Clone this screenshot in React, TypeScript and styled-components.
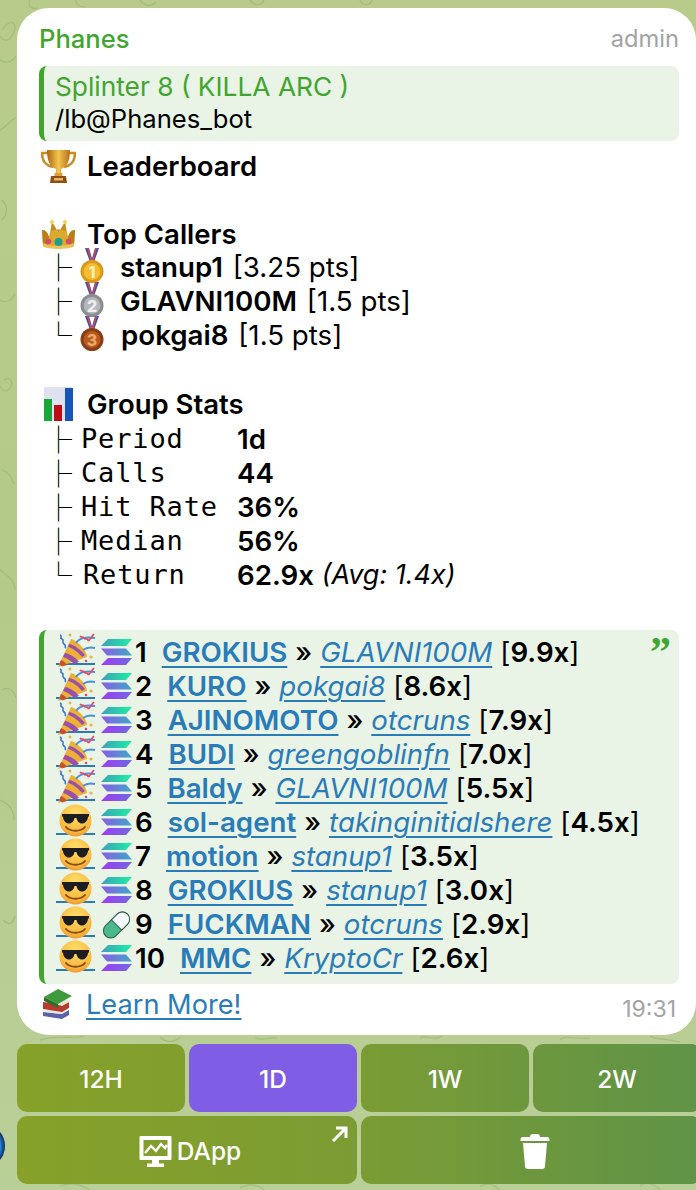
import React from "react";
import styled, { createGlobalStyle, css } from "styled-components";

const Global = createGlobalStyle`
  html, body { margin: 0; padding: 0; width: 696px; height: 1190px; overflow: hidden; background: #b7cc90; }
  * { box-sizing: border-box; }
`;

const Shell = styled.div`
  position: relative;
  width: 696px;
  height: 1190px;
  overflow: hidden;
  padding: 8px 0 0 17px;
  background: linear-gradient(180deg, #b8cb8a 0%, #b4ca8a 50%, #b9cf98 100%);
  font-family: Inter, "Noto Sans", sans-serif;
  color: #000;
`;
const Doodles = styled.svg`
  position: absolute;
  inset: 0;
  width: 696px;
  height: 1190px;
  pointer-events: none;
`;
const Bubble = styled.div`
  position: relative;
  width: 679px;
  height: 1027px;
  background: #fff;
  border-radius: 32px;
  padding: 11px 17px 0 22px;
`;
const Header = styled.div`
  display: flex;
  justify-content: space-between;
  align-items: center;
  height: 38px;
  margin-bottom: 9px;
`;
const Sender = styled.span`
  color: #42a52f;
  font-size: 25.6px;
  font-weight: 500;
`;
const Role = styled.span`
  color: #a3a3a3;
  font-size: 23.7px;
`;
const Reply = styled.div`
  height: 75px;
  border-radius: 8px;
  background: #e9f3e6;
  border-left: 5px solid #42a52f;
  padding: 5px 0 0 12px;
  margin-bottom: 8px;
`;
const ReplyTitle = styled.div`
  color: #42a52f;
  font-size: 26.3px;
  line-height: 32px;
  margin-left: -1px;
`;
const ReplyText = styled.div`
  font-size: 25.6px;
  line-height: 32px;
  margin-left: -1px;
`;
const Line = styled.div`
  height: 34px;
  line-height: 34px;
  font-size: 27.7px;
  white-space: pre;
  position: relative;
`;
const Heading = styled(Line)`
  display: flex;
  align-items: center;
  font-weight: 600;
  font-size: 27.5px;
  padding-left: 2px;
  gap: 11px;
`;
const Tree = styled.span`
  font-family: "Noto Sans CJK JP", sans-serif;
  font-size: 27px;
  font-weight: 300;
  display: inline-block;
  width: 27px;
  line-height: 34px;
  vertical-align: top;
`;
const TreeRow = styled(Line)<{ $down?: number; $up?: number }>`
  display: flex;
  align-items: center;
  padding-left: 6px;
  padding-top: ${(p) => p.$down ?? 0}px;
  padding-bottom: ${(p) => p.$up ?? 0}px;
`;
const MedalSlot = styled.span`
  display: inline-flex;
  margin-left: 7px;
`;
const Caller = styled.b<{ $shift: number }>`
  font-weight: 600;
  margin-left: ${(p) => p.$shift}px;
`;
const Plain = styled.span`
  font-weight: 400;
  margin-left: 2px;
`;
const Mono = styled.span<{ $nudge?: number }>`
  font-family: "DejaVu Sans Mono", monospace;
  font-size: 27px;
  letter-spacing: 0.85px;
  margin-left: ${(p) => 9 + (p.$nudge ?? 0)}px;
  width: ${(p) => 156 - (p.$nudge ?? 0)}px;
`;
const Value = styled.b`
  font-weight: 600;
`;
const Note = styled.i`
  font-weight: 400;
  font-size: 27px;
`;
const Quote = styled.div`
  position: relative;
  height: 354px;
  margin-top: 5px;
  border-radius: 8px;
  background: #e9f3e6;
  border-left: 5px solid #42a52f;
  padding: 5px 0 0 12px;
`;
const QuoteMark = styled.span`
  position: absolute;
  top: 1px;
  right: 8px;
  color: #42a52f;
  font-family: "Liberation Serif", serif;
  font-weight: 700;
  font-size: 42px;
  line-height: 42px;
`;
const EmojiLink = styled.a`
  display: inline-block;
  width: 39px;
  height: 30px;
  border-bottom: 2px solid #2a7cb8;
  vertical-align: top;
  position: relative;
`;
const linkStyle = css`
  color: #2a7cb8;
  text-decoration: underline;
  text-decoration-thickness: 2px;
  text-underline-offset: 4px;
`;
const Name = styled.a`
  ${linkStyle}
  font-weight: 600;
  margin-left: 15px;
`;
const Sep = styled.span`
  font-weight: 500;
  margin: 0 8px;
`;
const Who = styled.a`
  ${linkStyle}
  font-style: italic;
  font-weight: 400;
`;
const Multi = styled.span`
  margin-left: 8px;
  b { font-weight: 600; }
`;
const Num = styled.b`
  font-weight: 600;
  margin-left: 3px;
`;
const Footer = styled.div`
  display: flex;
  align-items: center;
  height: 38px;
  margin-top: 1px;
  padding-left: 3px;
  position: relative;
`;
const Learn = styled.a`
  ${linkStyle}
  font-size: 27.2px;
  margin-left: 12px;
`;
const Time = styled.span`
  position: absolute;
  right: 3px;
  top: 10px;
  font-size: 23px;
  color: #a3a3a3;
`;
const Keys = styled.div`
  display: grid;
  grid-template-columns: repeat(4, 168px);
  grid-auto-rows: 68px;
  gap: 4px;
  margin-top: 9px;
`;
const Key = styled.button<{ $active?: boolean; $span?: number; $pad?: number }>`
  position: relative;
  grid-column: span ${(p) => p.$span ?? 1};
  border: 0;
  padding: 2px 0 0 ${(p) => p.$pad ?? 0}px;
  border-radius: 10px;
  display: flex;
  align-items: center;
  justify-content: center;
  gap: 5px;
  color: #fff;
  font-family: Inter, sans-serif;
  font-size: 24.5px;
  font-weight: 500;
  background: ${(p) =>
    p.$active
      ? "#7f5de4"
      : "linear-gradient(90deg, #87a128 0%, #7c9c33 50%, #5f9347 100%) fixed"};
`;
const Corner = styled.svg`
  position: absolute;
  top: 9px;
  right: 8px;
`;
const Avatar = styled.div`
  position: absolute;
  left: -39px;
  top: 1124px;
  width: 44px;
  height: 44px;
  border-radius: 50%;
  background: radial-gradient(circle closest-side at 50% 50%, #27b6e8 0 72%, #1b5fb0 86%, #0b2a5a 100%);
`;
const Ic = styled.svg`
  flex: none;
  display: block;
`;
const MedalIc = styled.svg`
  flex: none;
  display: block;
  margin-top: -2px;
`;
const EmojiIc = styled.svg<{ $top: number }>`
  position: absolute;
  left: 0;
  top: ${(p) => p.$top}px;
`;
const Solana = styled.svg`
  display: inline-block;
  vertical-align: top;
  margin: 2px 0 0 6px;
`;

const Trophy = () => (
  <Ic width="35" height="35" viewBox="0 0 35 35">
    <defs>
      <linearGradient id="tg" x1="0" x2="1">
        <stop offset="0" stopColor="#a8650f" />
        <stop offset=".5" stopColor="#f4c54f" />
        <stop offset="1" stopColor="#b5701a" />
      </linearGradient>
    </defs>
    <path d="M7 4H1c0 9 5 13 11 14M28 4h6c0 9-5 13-11 14" fill="none" stroke="#c98d24" strokeWidth="2.4" />
    <path d="M6 1h23c0 11-3 17-9 19v5h-5v-5C9 18 6 12 6 1z" fill="url(#tg)" />
    <rect x="13.500" y="24" width="8" height="3" fill="#d9a138" />
    <path d="M10 27h15l1 7H9z" fill="#8f4f14" />
    <rect x="13" y="29" width="9" height="2.500" fill="#e9b75a" />
  </Ic>
);
const Crown = () => (
  <Ic width="35" height="30" viewBox="0 0 35 30">
    <path d="M1 11c4 0 6 3 7 7l3-15 6 10 1 0 6-10 3 15c1-4 3-7 7-7l-1 16c-6 3-25 3-31 0z" fill="#dca92f" />
    <path d="M1 11c4 0 6 3 7 8l-1 7-5 0zM34 11c-4 0-6 3-7 8l1 7 5 0z" fill="#b97d1c" />
    <path d="M11 3l6 10 1 0 6-10 1 9c-4-2-11-2-15 0z" fill="#c48a22" />
    <path d="M2 24c8 4 23 4 31 0l-.500 4c-8 2.500-22 2.500-30 0z" fill="#eac25a" />
    <circle cx="17.500" cy="23" r="4" fill="#1f9f8a" />
    <circle cx="7.500" cy="22.500" r="2.800" fill="#d84a6a" />
    <circle cx="27.500" cy="22.500" r="2.800" fill="#d84a6a" />
    <circle cx="11" cy="3" r="2" fill="#f0cf6a" />
    <circle cx="24" cy="3" r="2" fill="#f0cf6a" />
  </Ic>
);
const Medal = ({ c, d, t, n }: { c: string; d: string; t: string; n: string }) => (
  <MedalIc width="26" height="36" viewBox="0 0 26 36">
    <path d="M6 0h4l4 14h-3zM20 0h-4l-4 14h3z" fill="#3d4fa8" />
    <path d="M8 0h1.400l3.600 13h-1.400zM18 0h-1.400L13 13h1.400z" fill="#d84a4a" />
    <circle cx="13" cy="23.500" r="11.500" fill={c} />
    <circle cx="13" cy="23.500" r="8.400" fill={d} />
    <text x="13" y="29.500" textAnchor="middle" fontSize="16" fontWeight="800" fontFamily="Inter, sans-serif" fill={t}>
      {n}
    </text>
  </MedalIc>
);
const Chart = () => (
  <Ic width="35" height="36" viewBox="0 0 35 36">
    <rect x="3" y="1" width="28" height="34" fill="#dde2ee" />
    <rect x="3" y="13" width="8" height="22" fill="#17a838" />
    <rect x="13" y="19" width="8" height="16" fill="#c00c14" />
    <rect x="24" y="2" width="8" height="33" fill="#1457b8" />
  </Ic>
);
const Party = () => (
  <EmojiIc $top={-3} width="40" height="36" viewBox="0 0 40 36">
    <path d="M2 35L15 7c6 1 16 12 16 18z" fill="#eeb137" />
    <path d="M9 21c6 1 12 6 14 9l-5 2c-3-3-7-6-11-7zM13 12c6 1 13 7 16 11l-3 2c-3-4-9-9-14-10z" fill="#9a4fa8" />
    <path d="M5 28c3 1 5 3 6 5l-5 1.500c-1-1-2-2-3-2z" fill="#c8502e" />
    <path d="M20 11c4-6 11-6 19-5M27 18c4-3 8-3 12-2" fill="none" stroke="#4c8fd8" strokeWidth="2" />
    <path d="M4 3c3 1-1 3 2 4s-1 3 2 5 0 3 2 4" fill="none" stroke="#3a78d0" strokeWidth="1.600" />
    <path d="M24 4c1 2 3 0 4 2s3 0 4 2 3-3 6-6" fill="none" stroke="#e0486a" strokeWidth="1.700" />
    <circle cx="35" cy="25" r="1.600" fill="#e8b83a" />
    <circle cx="30" cy="29" r="1.300" fill="#e0486a" />
    <circle cx="14" cy="3" r="1.400" fill="#e8b83a" />
  </EmojiIc>
);
const Cool = () => (
  <EmojiIc $top={-1} width="40" height="33" viewBox="0 0 40 33">
    <defs>
      <radialGradient id="sm" cx=".5" cy=".3" r=".8">
        <stop offset="0" stopColor="#ffe06c" />
        <stop offset=".7" stopColor="#f9b73c" />
        <stop offset="1" stopColor="#e8852a" />
      </radialGradient>
    </defs>
    <circle cx="19.500" cy="16.500" r="16" fill="url(#sm)" />
    <path d="M6 10h27v2l-1 1c-.5 4-3 6.500-6 6.500s-5-2.500-5.500-5.500h-2C18 17 16 19.500 13 19.500S7.500 17 7 13l-1-1z" fill="#1d1d1f" />
    <path d="M10 23c4 5 15 5 19 0" fill="none" stroke="#8a4a14" strokeWidth="2" strokeLinecap="round" />
  </EmojiIc>
);
const Sol = () => (
  <Solana width="31" height="30" viewBox="0 0 31 30">
    <defs>
      <linearGradient id="so1" x1="0" x2="1">
        <stop offset="0" stopColor="#3fa0b8" />
        <stop offset="1" stopColor="#1cf0a4" />
      </linearGradient>
      <linearGradient id="so2" x1="0" x2="1">
        <stop offset="0" stopColor="#8a5ce8" />
        <stop offset="1" stopColor="#3fa8c8" />
      </linearGradient>
      <linearGradient id="so3" x1="0" x2="1">
        <stop offset="0" stopColor="#a03cf5" />
        <stop offset="1" stopColor="#7068e0" />
      </linearGradient>
    </defs>
    <path d="M7 2h24l-6 7H0z" fill="url(#so1)" />
    <path d="M0 11.500h25l6 7H6z" fill="url(#so2)" />
    <path d="M7 21h24l-6 7H0z" fill="url(#so3)" />
  </Solana>
);
const Pill = () => (
  <Solana width="31" height="32" viewBox="0 0 32 32">
    <g transform="rotate(-45 16 16)">
      <rect x="0" y="8.500" width="32" height="15" rx="7.500" fill="#4bb78c" stroke="#2a5a48" strokeWidth="1" />
      <path d="M16 8.500h8.500a7.500 7.500 0 010 15H16z" fill="#f6f8f8" stroke="#2a5a48" strokeWidth="1" />
    </g>
  </Solana>
);
const Books = () => (
  <Ic width="32" height="32" viewBox="0 0 32 32">
    <path d="M1 24l19 2 7-4v5l-7 4-19-3z" fill="#5a62a8" />
    <path d="M2 24l17 2 6-3-17-2z" fill="#e9e5da" />
    <path d="M1 14l19 3 7-3v6l-7 4-19-3z" fill="#b93a2c" />
    <path d="M3 13l9-5 17 5-9 5z" fill="#e9e5da" />
    <path d="M2 9l14-8 14 7-14 8z" fill="#3f9a3c" />
    <path d="M2 9l14 7v4L2 13z" fill="#2a6f2c" />
  </Ic>
);
const Monitor = () => (
  <Ic width="33" height="33" viewBox="0 0 33 33">
    <path fillRule="evenodd" d="M1.500 1h30a1 1 0 011 1v22a1 1 0 01-1 1H20v3.500h5V32H8v-3.500h5V25H1.500a1 1 0 01-1-1V2a1 1 0 011-1zm3 4V21h24V5z" fill="#fff" />
    <path d="M6 18l6-7 5 5 5-7 4 4 2-3" fill="none" stroke="#fff" strokeWidth="2.400" />
  </Ic>
);
const Trash = () => (
  <Ic width="30" height="35" viewBox="0 0 30 35">
    <path d="M10 3c0-2 1-3 3-3h4c2 0 3 1 3 3h7c1.500 0 2.500 1 2.500 2.500V7H.5V5.500C.5 4 1.500 3 3 3z" fill="#fff" />
    <path d="M3 9h24l-2 23c0 2-1 3-3 3H8c-2 0-3-1-3-3z" fill="#fff" />
  </Ic>
);

const medals = [
  { c: "#d99a1c", d: "#f4bd32", t: "#fff0b0", n: "1", name: "stanup1", val: "[3.25 pts]", tree: "├", shift: 15 },
  { c: "#8a8e94", d: "#b4b8bd", t: "#eef0f2", n: "2", name: "GLAVNI100M", val: "[1.5 pts]", tree: "├", shift: 15 },
  { c: "#8a3d14", d: "#b65a22", t: "#f0a868", n: "3", name: "pokgai8", val: "[1.5 pts]", tree: "└", shift: 16 },
];
const stats = [
  ["├", "Period", "1d"],
  ["├", "Calls", "44"],
  ["├", "Hit Rate", "36%"],
  ["├", "Median", "56%"],
  ["└", "Return", "62.9x"],
];
const rows = [
  { e: "p", i: "s", n: "1", name: "GROKIUS", who: "GLAVNI100M", x: "9.9x" },
  { e: "p", i: "s", n: "2", name: "KURO", who: "pokgai8", x: "8.6x" },
  { e: "p", i: "s", n: "3", name: "AJINOMOTO", who: "otcruns", x: "7.9x" },
  { e: "p", i: "s", n: "4", name: "BUDI", who: "greengoblinfn", x: "7.0x" },
  { e: "p", i: "s", n: "5", name: "Baldy", who: "GLAVNI100M", x: "5.5x" },
  { e: "c", i: "s", n: "6", name: "sol-agent", who: "takinginitialshere", x: "4.5x" },
  { e: "c", i: "s", n: "7", name: "motion", who: "stanup1", x: "3.5x" },
  { e: "c", i: "s", n: "8", name: "GROKIUS", who: "stanup1", x: "3.0x" },
  { e: "c", i: "m", n: "9", name: "FUCKMAN", who: "otcruns", x: "2.9x" },
  { e: "c", i: "s", n: "10", name: "MMC", who: "KryptoCr", x: "2.6x" },
];

export default function App() {
  return (
    <Shell>
      <Global />
      <Doodles viewBox="0 0 696 1190" fill="none" stroke="#a3bc7c" strokeWidth="1.2">
        <path d="M2 30c8-12 16-8 12 2s-10 10-14 4M30 0c-3 6 2 10 8 8M75 0c2 5 4 7 10 7M140 0c3 5 10 8 16 2M250 0c3 6 12 6 14 0M360 0c2 6 10 6 12 0" />
        <path d="M0 60c6 4 12 2 16-4M0 130c8-4 10-10 16-12M2 200c6 6 6 14 0 20M0 300c8 4 12 0 15-6M4 380c6-4 10 2 6 8s-8 2-10-2M2 470c6 2 10 8 12 14M0 570c8 6 14 10 15 20M2 690c6-4 12 0 14 8M0 800c10 4 14 12 14 20M3 920c6 6 10 4 12-4" />
        <path d="M40 1040c20-6 30 0 44-4M160 1037c6 6 14 6 20 0M255 1038c10 4 14-2 22 0M420 1038c6-4 14 4 22-2M560 1040c6-6 14 0 30-2M650 1036c6 4 14 2 30 6M60 1186c10-4 20-2 30 4M240 1188c10-6 20-2 24 2M480 1187c6-6 14-2 20 3M640 1186c4-4 12-4 20 4" />
      </Doodles>
      <Bubble>
        <Header>
          <Sender>Phanes</Sender>
          <Role>admin</Role>
        </Header>
        <Reply>
          <ReplyTitle>Splinter 8 ( KILLA ARC )</ReplyTitle>
          <ReplyText>/lb@Phanes_bot</ReplyText>
        </Reply>
        <Heading>
          <Trophy />
          Leaderboard
        </Heading>
        <Line />
        <Heading>
          <Crown />
          Top Callers
        </Heading>
        {medals.map((m) => (
          <TreeRow key={m.n} $up={2}>
            <Tree>{m.tree}</Tree>
            <MedalSlot>
              <Medal c={m.c} d={m.d} t={m.t} n={m.n} />
            </MedalSlot>
            <Caller $shift={m.shift}>{m.name}</Caller>
            <Plain> {m.val}</Plain>
          </TreeRow>
        ))}
        <Line />
        <Heading>
          <Chart />
          Group Stats
        </Heading>
        {stats.map(([t, k, v]) => (
          <TreeRow key={k} $down={1}>
            <Tree>{t}</Tree>
            <Mono $nudge={k === "Return" ? 2 : 0}>{k}</Mono>
            <Value>{v}</Value>
            {k === "Return" && <Note> (Avg: 1.4x)</Note>}
          </TreeRow>
        ))}
        <Line />
        <Quote>
          <QuoteMark>”</QuoteMark>
          {rows.map((r, i) => (
            <Line key={i}>
              <EmojiLink>{r.e === "p" ? <Party /> : <Cool />}</EmojiLink>
              {r.i === "s" ? <Sol /> : <Pill />}
              <Num>{r.n}</Num>
              <Name>{r.name}</Name>
              <Sep>»</Sep>
              <Who>{r.who}</Who>
              <Multi>
                [<b>{r.x}</b>]
              </Multi>
            </Line>
          ))}
        </Quote>
        <Footer>
          <Books />
          <Learn>Learn More!</Learn>
          <Time>19:31</Time>
        </Footer>
      </Bubble>
      <Avatar />
      <Keys>
        <Key>12H</Key>
        <Key $active>1D</Key>
        <Key>1W</Key>
        <Key>2W</Key>
        <Key $span={2} $pad={6}>
          <Monitor />
          DApp
          <Corner width="18" height="18" viewBox="0 0 18 18">
            <path d="M2 16L15 3M5 3h10v10" fill="none" stroke="#fff" strokeWidth="3" />
          </Corner>
        </Key>
        <Key $span={2} $pad={8}>
          <Trash />
        </Key>
      </Keys>
    </Shell>
  );
}
